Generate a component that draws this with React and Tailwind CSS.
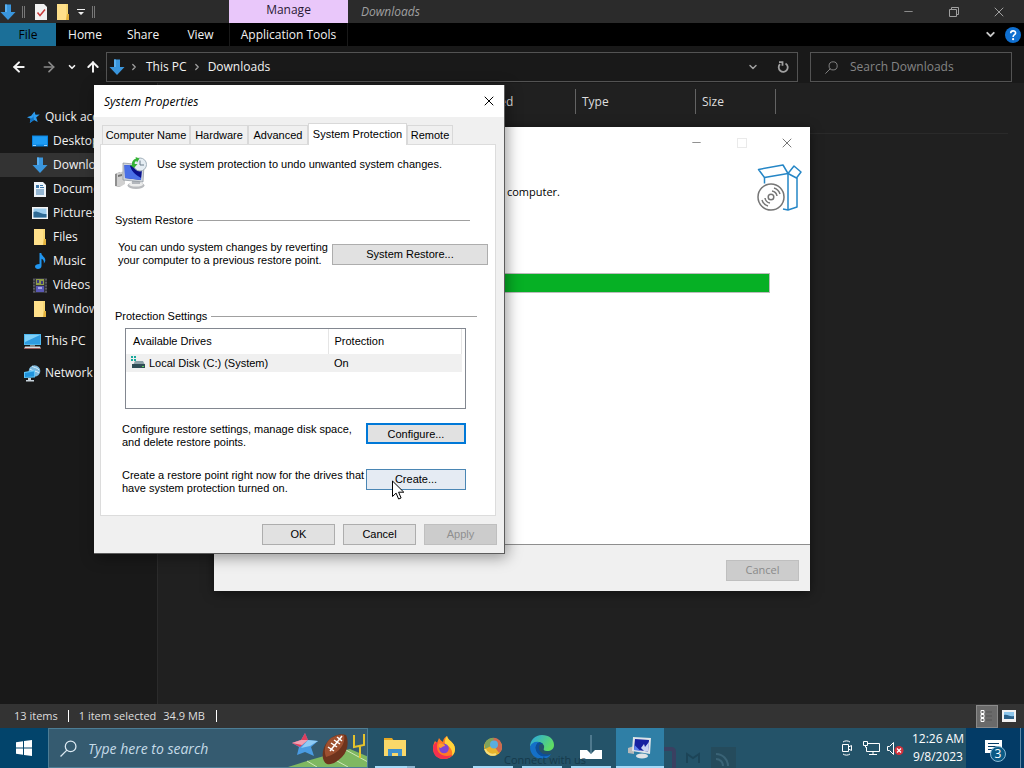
import { useState } from 'react';
import { ArrowLeft, ArrowRight, ArrowUp, ChevronDown, ChevronRight, Minus, X } from 'lucide-react';

const DownArrow = ({ size = 16 }) => (
    <svg width={size} height={size} viewBox="0 0 16 16">
        <path d="M5 0.5h6v7.5h4.5L8 16 0.5 8H5z" fill="#3a96dd" />
        <path d="M5 0.5h2v7.5H5z" fill="#5ab0f0" />
    </svg>
);

const FolderIcon = () => (
    <svg width="16" height="16" viewBox="0 0 16 16">
        <path d="M2 0h11v11h1v5H2z" fill="#f7d774" />
        <path d="M2 0h9v16H2z" fill="#ffe08a" />
        <path d="M12 10h2v6h-3z" fill="#e2b13c" />
    </svg>
);

const StarIcon = () => (
    <svg width="16" height="16" viewBox="0 0 16 16">
        <path d="M9.500 2.500l1 3.300 4.200-.2-3.500 2.900 1.500 4.500-3.700-2.100L4.800 14l.9-4.300L2 8.300l4.200-1.500z" fill="#2d9df0" />
        <path d="M9.500 2.500L8.200 8l-2.500 1.700L4.800 14l4.200-3.100L8.500 8z" fill="#1273c4" />
    </svg>
);

const DesktopIcon = () => (
    <svg width="16" height="16" viewBox="0 0 16 16">
        <path d="M0 2.500h16v11H0z" fill="#0a84e0" />
        <path d="M1 3.500h14v8H1z" fill="#1e9cf5" />
        <path d="M1 12h3v1H1zM12 12h3v1h-3z" fill="#9fd5ff" />
    </svg>
);

const DocIcon = () => (
    <svg width="16" height="16" viewBox="0 0 16 16">
        <path d="M2 1h9l3 3v12H2z" fill="#eef4f9" />
        <path d="M4 4h3v3H4zM8 4h3v1H8zM8 6h4v1H8zM4 8.500h8v1H4zM4 10.500h8v1H4zM4 12.500h8v1H4z" fill="#3b78ab" />
    </svg>
);

const PictureIcon = () => (
    <svg width="16" height="16" viewBox="0 0 16 16">
        <path d="M0 2h16v12H0z" fill="#f4f4f4" />
        <path d="M1.500 3.500h13v9h-13z" fill="#9ccdee" />
        <path d="M1.500 7c4-2 6 2 13 2v3.500h-13z" fill="#2f6a94" />
    </svg>
);

const MusicIcon = () => (
    <svg width="16" height="16" viewBox="0 0 16 16">
        <path d="M7.500 0h1.800c.3 3.200 4.200 4 4 7.500-.1 1.500-1 2.500-1.600 2.900.6-2.400-.4-4-2.200-4.600V13c0 1.900-1.700 3-3.500 3S3 15 3 13.500 4.700 11 7.500 11z" fill="#2196ef" />
    </svg>
);

const VideoIcon = () => (
    <svg width="16" height="16" viewBox="0 0 16 16">
        <path d="M1 1h14v15H1z" fill="#34343c" />
        <path d="M4 2h8v6H4z" fill="#8f9d4a" />
        <path d="M4 9h8v6H4z" fill="#5a59b5" />
        <path d="M5 3h2v3H5zM9 4h2v3H9z" fill="#3d3a80" />
        <path d="M6 10h4v2H6z" fill="#a5a4e6" />
        <path d="M2 2v14M14 2v14" stroke="#808080" strokeDasharray="1.500 1.500" />
    </svg>
);

const ThisPcIcon = () => (
    <svg width="17" height="16" viewBox="0 0 17 16">
        <path d="M0 1h17v11H0z" fill="#4fb8ef" />
        <path d="M1 2h15v9H1z" fill="#2f9be0" />
        <path d="M1 2h15L1 9z" fill="#7fd0f8" />
        <path d="M6 12h5v1.500H6z" fill="#8a8a8a" />
        <path d="M1 13.500h15L17 16H0z" fill="#d9dde0" />
        <path d="M0 15h17v1H0z" fill="#9a5a5a" />
    </svg>
);

const NetworkIcon = () => (
    <svg width="17" height="17" viewBox="0 0 17 17">
        <circle cx="10.500" cy="6" r="5.800" fill="#7db8dc" />
        <path d="M8 1c2 2 5 1 7 4M6 4c3 3 6 1 9 4" stroke="#d8eefb" fill="none" />
        <path d="M0 7l11-2v7.500L0 13z" fill="#5cc4f7" />
        <path d="M1 8l9-1.500v5L1 12z" fill="#2093dc" />
        <path d="M4 13h3v2H4zM2 15h8v1.500H2z" fill="#c8d4dc" />
    </svg>
);

const SystemIcon = ({ size = 32 }) => (
    <svg width={size} height={size} viewBox="0 0 32 32">
        <path d="M0 17l5-2v15l-5-1z" fill="#8f8f8f" />
        <path d="M2 16l8-2v13l-5 3-3-1z" fill="#d0d0d0" />
        <path d="M3 18l4-1v2l-4 1z" fill="#777" />
        <ellipse cx="21" cy="28.500" rx="8.500" ry="3.500" fill="#b9bbbe" />
        <ellipse cx="21" cy="27.300" rx="7" ry="2.300" fill="#eceded" />
        <path d="M17 22h8v5h-8z" fill="#b3b7bd" />
        <path d="M8 6l21 2-1 17-20-2z" fill="#cfd4da" stroke="#8a9098" strokeWidth=".7" />
        <path d="M9.500 8l17.500 1.500-1 13.500-16-2z" fill="#1224b4" />
        <path d="M9.500 8l6 .6c1 5 4 9 10.500 12.400V23l-16-2z" fill="#4a70e6" />
        <path d="M15 8.500l12 1-1 11c-6-3-10-7-11-12z" fill="#0a118a" />
        <circle cx="25" cy="7.500" r="6.500" fill="#e5edf3" stroke="#a2b0ba" />
        <path d="M25 3.500v4.500h4" stroke="#6b7d8a" fill="none" />
        <path d="M17 8c-.5-3 1-5.500 4-6.500l-.5-1.500 4 1.500-2.500 4-.7-1.700c-1.300.8-1.800 1.700-1.600 3.200h2.800L19 11l-4-3z" fill="#35b335" />
    </svg>
);

const DriveIcon = () => (
    <svg width="16" height="14" viewBox="0 0 16 14">
        <path d="M1 0h2v2H1zM4 0h2v2H4zM1 3h2v2H1zM4 3h2v2H4z" fill="#19a99d" />
        <path d="M5 5h8l2 4H3z" fill="#8ca0a8" />
        <path d="M2 8h13v4H2z" fill="#2f4c55" />
        <path d="M12 10h2v1h-2z" fill="#5ed35e" />
    </svg>
);

const BoxIcon = () => (
    <svg width="46" height="50" viewBox="0 0 46 50" fill="none">
        <g stroke="#2586c6" strokeWidth="1.500" strokeLinejoin="round">
            <path d="M1.500 6.500L26 2l5 8.500-23.500 4z" />
            <path d="M31 10.500l6-7.500 7 6-4.500 6z" />
            <path d="M7.500 14.500v6M31 10.500V47M40 15v29l-9 3-5-1" />
        </g>
        <g stroke="#767676" strokeWidth="1.500">
            <circle cx="14" cy="34" r="13" fill="#fff" />
            <circle cx="14" cy="34" r="2.800" />
            <path d="M15 28a6 6 0 015 5M17 25a9 9 0 016 6M13 40a6 6 0 01-5-5M11 43a9 9 0 01-6-6" />
        </g>
    </svg>
);

const SearchIcon = ({ size = 14 }) => (
    <svg width={size} height={size} viewBox="0 0 16 16" fill="none" stroke="currentColor" strokeWidth="1.200">
        <circle cx="10" cy="6" r="5" />
        <path d="M6.500 9.500L.5 15.500" />
    </svg>
);

const HelpIcon = () => (
    <svg width="16" height="16" viewBox="0 0 16 16" fill="none">
        <circle cx="8" cy="8" r="8" fill="#0f6fd0" />
        <path d="M5.700 6.200c0-3.200 4.900-3 4.900-.3 0 1.800-2.500 1.700-2.500 4" stroke="#fff" strokeWidth="1.600" />
        <circle cx="8.100" cy="12.200" r="1.100" fill="#fff" />
    </svg>
);

const RefreshIcon = () => (
    <svg width="12" height="12" viewBox="0 0 12 12" fill="none" stroke="currentColor" strokeWidth="1.800">
        <path d="M8.500 2.500A4.500 4.500 0 113 3.200" />
        <path d="M2 1.200h3.500v3.500" />
    </svg>
);

const TITLE_ICON = 'flex h-6 w-[45px] items-center justify-center';

const TitleBar = () => (
    <header className="flex h-[23px] items-stretch justify-between bg-[#2b2b2b] text-[#a0a0a0]">
        <div className="flex items-stretch">
            <div className="flex w-[229px] items-center">
                <DownArrow />
                <span className="ml-[6px] h-3 w-[3px] border-x border-[#777]" />
                <svg className="ml-[10px]" width="12" height="16" viewBox="0 0 12 16">
                    <path d="M0 0h9l3 3v13H0z" fill="#f2f2f2" />
                    <path d="M2.500 8.500l2.500 3 5-6" stroke="#c93c3c" strokeWidth="1.500" fill="none" />
                </svg>
                <span className="ml-2"><FolderIcon /></span>
                <svg className="ml-[6px]" width="8" height="8" viewBox="0 0 8 8" fill="#eee">
                    <path d="M0 1h8v1H0zM1 4h6L4 7z" />
                </svg>
                <span className="ml-[7px] h-3 w-[3px] border-x border-[#777]" />
            </div>
            <div className="w-[119px] bg-[#e9c7fa] text-center leading-[20px] text-[#2a1a35]">Manage</div>
            <h1 className="ml-[13px] leading-[23px] italic">Downloads</h1>
        </div>
        <div className="flex items-center pr-[3px]">
            <button aria-label="Minimize" className={TITLE_ICON}><Minus size={13} strokeWidth={1.5} /></button>
            <button aria-label="Restore" className={TITLE_ICON}>
                <svg width="10" height="10" viewBox="0 0 10 10" fill="none" stroke="currentColor">
                    <path d="M.5 2.500h7v7h-7zM2.500 2.500v-2h7v7h-2" />
                </svg>
            </button>
            <button aria-label="Close" className={TITLE_ICON}><X size={16} strokeWidth={1.5} /></button>
        </div>
    </header>
);

const Ribbon = () => (
    <nav className="flex h-[23px] items-stretch bg-black text-[#f2f2f2]">
        <button className="w-14 bg-[#1b6f98] text-black">File</button>
        <button className="w-[58px]">Home</button>
        <button className="w-[58px]">Share</button>
        <button className="w-[57px]">View</button>
        <button className="w-[119px] border-x border-[#191919]">Application Tools</button>
        <div className="ml-auto flex items-center gap-2 pr-[3px]">
            <ChevronDown size={13} strokeWidth={3.5} className="text-[#c8c8c8]" />
            <HelpIcon />
        </div>
    </nav>
);

const AddressBar = () => (
    <div className="flex h-[37px] items-center bg-[#191919] pr-3 pt-[5px] text-[#f2f2f2]">
        <div className="flex w-[106px] shrink-0 items-center">
            <button aria-label="Back" className="ml-[11px]"><ArrowLeft size={16} strokeWidth={3} /></button>
            <button aria-label="Forward" className="ml-[14px] text-[#8a8a8a]"><ArrowRight size={16} strokeWidth={2.5} /></button>
            <button aria-label="Recent locations" className="ml-[10px]"><ChevronDown size={10} strokeWidth={4} /></button>
            <button aria-label="Up" className="ml-[8px]"><ArrowUp size={16} strokeWidth={3} /></button>
        </div>
        <div className="flex h-[30px] flex-1 items-center border border-[#535353]">
            <span className="ml-[2px]"><DownArrow /></span>
            <ChevronRight className="ml-[4px] text-[#a0a0a0]" size={10} strokeWidth={3} />
            <a href="#pc" className="ml-[7px]">This PC</a>
            <ChevronRight className="ml-[5px] text-[#a0a0a0]" size={10} strokeWidth={3} />
            <a href="#downloads" className="ml-[6px]">Downloads</a>
            <ChevronDown className="ml-auto text-[#a0a0a0]" size={12} strokeWidth={3} />
            <button aria-label="Refresh" className="ml-[10px] flex w-7 justify-center text-[#a0a0a0]">
                <RefreshIcon />
            </button>
        </div>
        <label className="ml-3 flex h-[30px] w-[202px] items-center border border-[#535353] text-[#858585]">
            <span className="ml-[14px]"><SearchIcon size={13} /></span>
            <input aria-label="Search Downloads" placeholder="Search Downloads" className="ml-[12px] w-[140px] bg-transparent outline-none placeholder:text-[#858585]" />
        </label>
    </div>
);

const QUICK_ITEMS = [
    { name: 'Desktop', icon: DesktopIcon },
    { name: 'Downloads', icon: DownArrow, current: true },
    { name: 'Documents', icon: DocIcon },
    { name: 'Pictures', icon: PictureIcon },
    { name: 'Files', icon: FolderIcon },
    { name: 'Music', icon: MusicIcon },
    { name: 'Videos', icon: VideoIcon },
    { name: 'Windows', icon: FolderIcon },
];

const Sidebar = () => (
    <aside className="w-[158px] shrink-0 border-r border-[#2b2b2b] bg-[#191919] pt-[22px] text-[#f2f2f2]">
        <a href="#quick" className="flex h-6 items-center gap-1 pl-[25px]"><StarIcon />Quick access</a>
        {QUICK_ITEMS.map(({ name, icon: Icon, current }) => (
            <a key={name} href="#folder" className={`flex h-6 items-center gap-[5px] pl-8 ${current ? 'bg-[#333]' : ''}`}>
                <Icon />{name}
            </a>
        ))}
        <a href="#pc" className="mt-2 flex h-6 items-center gap-1 pl-6"><ThisPcIcon />This PC</a>
        <a href="#network" className="mt-2 flex h-6 items-center gap-1 pl-6"><NetworkIcon />Network</a>
    </aside>
);

const FileList = () => (
    <main className="min-w-0 flex-1 bg-[#202020] pt-[6px] text-[#dedede]">
        <div className="flex h-[25px] leading-[25px]">
            <div className="w-[270px]" />
            <div className="w-[148px] border-r border-[#636363] pl-[6px]">Date modified</div>
            <div className="w-[120px] border-r border-[#636363] pl-[6px]">Type</div>
            <div className="w-20 border-r border-[#636363] pl-[6px]">Size</div>
        </div>
        <div className="mx-4 mt-[19px] border-t border-[#2a2a2a]" />
    </main>
);

const StatusBar = () => (
    <footer className="flex h-6 items-center bg-[#333] pl-[14px] pr-[7px] text-[11px] text-[#dedede]">
        <span>13 items</span>
        <span className="ml-[10px] h-3 border-l border-white" />
        <span className="ml-[10px]">1 item selected</span>
        <span className="ml-[7px]">34.9 MB</span>
        <span className="ml-[11px] h-3 border-l border-white" />
        <button aria-label="Details view" className="ml-auto flex h-[23px] w-[22px] items-center border border-[#8a8a8a] bg-[#6a6a6a] pl-[3px]">
            <svg width="12" height="14" viewBox="0 0 12 14" fill="none">
                <path d="M1 1.500h3v3H1zM1 5.500h3v3H1zM1 9.500h3v3H1z" stroke="#fff" />
                <path d="M6 3h6M6 7h6M6 11h6" stroke="#555" />
            </svg>
        </button>
        <button aria-label="Thumbnail view" className="ml-[3px] flex w-4 justify-center">
            <svg width="14" height="12" viewBox="0 0 14 12">
                <path d="M0 0h14v12H0z" fill="#f2f2f2" />
                <path d="M2 2h10v7H2z" fill="#8cc6ec" />
                <path d="M2 5c4-1 5 2 10 1v3H2z" fill="#2c628a" />
            </svg>
        </button>
    </footer>
);

const InstallerWindow = () => (
    <section aria-label="Setup" className="absolute left-[214px] top-[127px] flex h-[464px] w-[596px] flex-col bg-white text-black shadow-[0_2px_10px_rgba(0,0,0,0.5)]">
        <div className="flex h-[31px] items-center justify-end pr-px text-[#777]">
            <button aria-label="Minimize" className={TITLE_ICON}><Minus size={13} strokeWidth={1.5} /></button>
            <button aria-label="Maximize" disabled className={TITLE_ICON}><span className="size-[10px] border border-[#eaeaea]" /></button>
            <button aria-label="Close" className={TITLE_ICON}><X size={16} strokeWidth={1.5} /></button>
        </div>
        <div className="flex justify-between pl-[54px] pr-[7px] pt-[5px]">
            <p className="w-[292px] pt-[21px] text-right text-[11px] leading-4">Please wait while setup runs on your computer.</p>
            <BoxIcon />
        </div>
        <div className="ml-[54px] mr-10 mt-[60px] h-5 border border-[#bcbcbc] bg-[#06b025]" />
        <div className="mt-auto flex h-[47px] items-center justify-end border-t border-[#8e8e8e] bg-[#f0f0f0] pr-[11px] pt-1">
            <button disabled className="h-[21px] w-[73px] border border-[#bfbfbf] bg-[#ccc] text-[11px] text-[#8a8a8a]">Cancel</button>
        </div>
    </section>
);

const TABS = ['Computer Name', 'Hardware', 'Advanced', 'System Protection', 'Remote'];
const TAB_WIDTHS = ['w-[88px]', 'w-[58px]', 'w-[60px]', 'w-[99px]', 'w-[46px]'];

const Group = ({ title, className, children }) => (
    <section className={className}>
        <h2 className="ml-[14px] flex items-center gap-1 leading-4">
            {title}
            <span className="flex-1 border-t border-[#a0a0a0]" />
        </h2>
        {children}
    </section>
);

const PushButton = ({ className = '', ...props }) => (
    <button className={`h-[21px] shrink-0 border leading-[19px] ${className}`} {...props} />
);

const PLAIN = 'border-[#adadad] bg-[#e1e1e1]';

const SystemProperties = () => {
    const [tab, setTab] = useState('System Protection');

    return (
        <section role="dialog" aria-label="System Properties" className="absolute left-[94px] top-[85px] w-[411px] whitespace-nowrap border-b border-r border-[#5c5c5c] bg-[#f0f0f0] font-['Liberation_Sans',Arial,sans-serif] text-[11px] leading-[13px] text-black shadow-[2px_3px_14px_rgba(0,0,0,0.4)]">
            <div className="flex h-8 items-center justify-between bg-white pl-[10px] pr-[7px] font-['Open_Sans',sans-serif] text-[12px]">
                <h1 className="italic">System Properties</h1>
                <button aria-label="Close"><X size={16} strokeWidth={1.5} /></button>
            </div>
            <div role="tablist" className="flex h-[27px] items-end pl-2">
                {TABS.map((name, i) => (
                    <button
                        key={name}
                        role="tab"
                        aria-selected={tab === name}
                        onClick={() => setTab(name)}
                        className={`whitespace-nowrap border border-b-0 border-[#d9d9d9] ${TAB_WIDTHS[i]} ${tab === name ? '-mb-px h-[22px] bg-white pb-px' : 'h-[19px] bg-[#f0f0f0]'}`}
                    >
                        {name}
                    </button>
                ))}
            </div>
            <div className="ml-[6px] mr-2 border border-[#dcdcdc] bg-white pb-[20px] pt-3">
                <div className="flex pl-[14px]">
                    <SystemIcon />
                    <p className="ml-[10px] pt-px">Use system protection to undo unwanted system changes.</p>
                </div>
                <Group title="System Restore" className="mt-[23px] [&>h2]:mr-[25px]">
                    <div className="mt-[13px] flex items-center justify-between pl-[17px] pr-[7px]">
                        <p>You can undo system changes by reverting<br />your computer to a previous restore point.</p>
                        <PushButton className={`w-[156px] ${PLAIN}`}>System Restore...</PushButton>
                    </div>
                </Group>
                <Group title="Protection Settings" className="mt-[41px] [&>h2]:mr-[18px]">
                    <div className="ml-[24px] mr-[29px] mt-1 h-[81px] border border-[#828790] pr-[3px]">
                        <table className="w-full border-collapse text-left">
                            <thead>
                                <tr className="h-[25px]">
                                    <th className="w-[202px] border-r border-[#e5e5e5] pl-[7px] font-normal">Available Drives</th>
                                    <th className="border-r border-[#e5e5e5] pl-[6px] font-normal">Protection</th>
                                </tr>
                            </thead>
                            <tbody>
                                <tr className="h-[18px] bg-[#f0f0f0]">
                                    <td className="pl-1"><span className="flex items-center gap-[3px]"><DriveIcon />Local Disk (C:) (System)</span></td>
                                    <td className="pl-[6px]">On</td>
                                </tr>
                            </tbody>
                        </table>
                    </div>
                    <div className="ml-[21px] mr-[29px] mt-[14px] flex items-start justify-between">
                        <p>Configure restore settings, manage disk space,<br />and delete restore points.</p>
                        <PushButton className="w-[100px] border-2 border-[#0078d7] bg-[#e1e1e1] leading-[17px]">Configure...</PushButton>
                    </div>
                    <div className="ml-[21px] mr-[29px] mt-[20px] flex items-start justify-between">
                        <p>Create a restore point right now for the drives that<br />have system protection turned on.</p>
                        <PushButton className="w-[100px] border-[#4a86b4] bg-[#e5ebf3]">Create...</PushButton>
                    </div>
                </Group>
            </div>
            <div className="flex justify-end gap-2 pb-2 pr-[7px] pt-2">
                <PushButton className={`w-[73px] ${PLAIN}`}>OK</PushButton>
                <PushButton className={`w-[73px] ${PLAIN}`}>Cancel</PushButton>
                <PushButton disabled className="w-[73px] border-[#bfbfbf] bg-[#ccc] text-[#8f8f8f]">Apply</PushButton>
            </div>
        </section>
    );
};

const Cursor = () => (
    <svg className="pointer-events-none absolute left-[392px] top-[480px]" width="13" height="20" viewBox="0 0 13 20">
        <path d="M.5 1v15.500l3.600-3.400 2.500 5.900 2.500-1-2.500-5.800h5.200z" fill="#fff" stroke="#000" />
    </svg>
);

const ExplorerTaskIcon = () => (
    <svg width="24" height="20" viewBox="0 0 24 20">
        <path d="M1 1h8l2 3H1z" fill="#e6a823" />
        <path d="M1 3h22v16H1z" fill="#fad869" />
        <path d="M5 19v-7h14v7h-4v-3H9v3z" fill="#3f90cc" />
    </svg>
);

const FirefoxIcon = () => (
    <svg width="24" height="24" viewBox="0 0 24 24">
        <path d="M12 23C5 23 1 18 1 12c0-3 1-5 2-7l2 2 2-5c1 2 3 3 4 4 0-3 2-5 4-6 1 5 8 6 8 13 0 6-5 10-11 10z" fill="#ff7a24" />
        <path d="M15 0c1 5 8 6 8 13 0 3-1 5-3 7 1-5-1-8-4-10-3-1-5-4-1-10z" fill="#ffd43a" />
        <path d="M1 12c0 7 4 11 11 11 4 0 7-2 8-4-8 3-15-1-15-8 0-2 0-3 1-5C3 6 1 9 1 12z" fill="#f5304e" />
        <circle cx="12" cy="12.500" r="4.800" fill="#8045d3" />
        <path d="M7 8c3-1 6 0 6 2-2 0-3 1-4 2-2 0-3-2-2-4z" fill="#ff9a30" />
    </svg>
);

const ChromeIcon = () => (
    <svg width="20" height="20" viewBox="0 0 20 20">
        <circle cx="10" cy="10" r="9" fill="#e8b32c" />
        <path d="M9 1c6-1 10 4 10 9 0 3-1 5-3 6L11 9z" fill="#cf6952" />
        <path d="M2 6c2-4 5-5 9-5L8 9 2 12z" fill="#7fa35c" />
        <circle cx="11" cy="7.500" r="4" fill="#5aaee0" />
        <path d="M2 12a8 8 0 0011 5" stroke="#f6dd7a" strokeWidth="2" fill="none" />
    </svg>
);

const EdgeIcon = () => (
    <svg width="26" height="26" viewBox="0 0 26 26">
        <defs>
            <linearGradient id="edgeTop" x1="0" x2="1" y1="0" y2="0.500">
                <stop offset="0" stopColor="#27a6e6" />
                <stop offset="1" stopColor="#5fdc64" />
            </linearGradient>
        </defs>
        <path d="M1 13C1 6 6 1 13 1s12 4 12 10c0 4-3 6-7 6-3 0-4-1-3-3 1-4-3-6-7-5-4 0-6 2-7 4z" fill="url(#edgeTop)" />
        <path d="M1 13c1-4 5-6 9-5-3 2-4 5-3 8 2 6 9 8 15 4-2 4-6 5-9 5C6 25 1 20 1 13z" fill="#1470c8" />
        <path d="M10 12c-1 6 4 10 12 8-5 4-13 3-15-4-1-3 0-6 3-8 2 0 3 1 4 2-2 0-3 0-4 2z" fill="#0c4f9c" />
    </svg>
);

const InstallerTaskIcon = () => (
    <svg width="22" height="26" viewBox="0 0 22 26">
        <path d="M11 1v18" stroke="#7ba0b4" />
        <path d="M0 16h7l4 4 4-4h7v9H0z" fill="#fff" />
    </svg>
);

const SystemTaskIcon = () => (
    <svg width="24" height="24" viewBox="0 0 24 24">
        <path d="M0 13l6-2v8l-6-1z" fill="#b9b9b9" />
        <ellipse cx="14" cy="21" rx="6" ry="2.500" fill="#dfe3e6" />
        <path d="M5 2l18 1-1 16-18-3z" fill="#dde3e8" />
        <path d="M7 4l14 1-1 11.500-14-2z" fill="#1620a0" />
        <path d="M6.500 10l6 6-6.500-1z" fill="#5c80ee" />
        <path d="M13 13l3-4 1 3 4-5-1 9.500-4-.5z" fill="#c9d4f2" />
    </svg>
);

const TASKS = [
    { name: 'File Explorer', icon: ExplorerTaskIcon, mark: 'mx-1 border-r-8 border-[#8db5d0]' },
    { name: 'Firefox', icon: FirefoxIcon },
    { name: 'Chrome', icon: ChromeIcon, mark: 'mx-1' },
    { name: 'Edge', icon: EdgeIcon, mark: 'mx-1' },
    { name: 'Setup', icon: InstallerTaskIcon, mark: 'mx-1' },
    { name: 'System Properties', icon: SystemTaskIcon, mark: '', active: true },
];

const SearchArt = () => (
    <svg width="84" height="38" viewBox="-2 0 84 38" fill="none">
        <path d="M3 38C25 31 45 25 65 20l19 8v10z" fill="#7fb861" />
        <path d="M22 32l10 6M43 27l20 11M61 21l22 12" stroke="#cfe6b8" />
        <path d="M20 4l3 7 10 1-7 6 3 9-9-4-8 3 2-8-7-4 9-3z" fill="#4a9be2" />
        <path d="M20 4l-4 7-9 3 8 4 2-2 6-5z" fill="#de3f5c" />
        <path d="M16 11l7 0-6 5-10-2z" fill="#f2a0b0" />
        <path d="M23 11l10 1-8 5-9 2z" fill="#90cbf5" />
        <path d="M42 35c-6-3-6-15 1-23 5-6 13-8 18-6 3 6 2 16-4 22-5 5-10 8-15 7z" fill="#6e341d" />
        <path d="M41 28c-3-8 0-15 5-19 5-3 10-4 13-3 2 8-4 18-18 22z" fill="#9d5030" />
        <path d="M45 22L57 7M43 18l6 4M46 14l6 4M49 11l6 4M52 8l5 4" stroke="#fff" strokeWidth="1.500" />
        <path d="M69 6v12l10-2V5M75 17v12" stroke="#e5c22c" strokeWidth="2" />
    </svg>
);

const Tray = () => (
    <div className="flex items-center text-white">
        <svg width="14" height="16" viewBox="0 0 14 16" fill="none" stroke="currentColor">
            <path d="M2.500 4.500h6v7h-6zM8.500 7l3-1.500v5L8.500 9M3 2c2-1.500 5-1.500 7 0M3 14c2 1.500 5 1.500 7 0" />
        </svg>
        <svg className="ml-[9px]" width="17" height="15" viewBox="0 0 17 15" fill="none" stroke="currentColor">
            <path d="M5 2.500h11.500v8H3.500V6M10 10.500v3M6 13.500h8M.5.500h4v4h-4zM2.500 4.500v2" />
        </svg>
        <svg className="ml-[7px]" width="17" height="15" viewBox="0 0 17 15" fill="none">
            <path d="M.5 5.500h2l4-4v12l-4-4h-2z" stroke="#fff" />
            <circle cx="12" cy="9.500" r="4.500" fill="#d3303b" />
            <path d="M10 7.500l4 4M14 7.500l-4 4" stroke="#fff" strokeWidth="1.200" />
        </svg>
        <time className="ml-[6px] w-14 whitespace-nowrap text-center leading-[18px]">12:26 AM<br />9/8/2023</time>
    </div>
);

const Taskbar = () => (
    <div className="relative flex h-10 shrink-0 items-stretch overflow-hidden bg-[#245369]">
        <button aria-label="Start" className="flex w-12 items-center justify-center bg-[#02446b]">
            <svg width="16" height="16" viewBox="0 0 16 16" fill="#fff">
                <path d="M0 2.200l7-1v6.300H0zM8 1l8-1v7.500H8zM0 8.500h7v6.300l-7-1zM8 8.500h8V16l-8-1z" />
            </svg>
        </button>
        <label className="flex w-80 items-center border border-[#4d7d95] bg-[#355b70] text-[#dbe9f2]">
            <span className="ml-[11px]"><SearchIcon size={17} /></span>
            <input aria-label="Type here to search" placeholder="Type here to search" className="ml-[11px] min-w-0 flex-1 bg-transparent text-[14px] italic outline-none placeholder:text-[#c5dbe8]" />
            <SearchArt />
        </label>
        <div className="ml-[3px] flex gap-px">
            {TASKS.map(({ name, icon: Icon, mark, active }) => (
                <button key={name} aria-label={name} className={`flex w-12 flex-col items-stretch ${active ? 'bg-[#2f7fa6]' : ''}`}>
                    <span className="flex flex-1 items-center justify-center"><Icon /></span>
                    {mark !== undefined && <span className={`h-[2px] bg-[#a5daf8] ${mark}`} />}
                </button>
            ))}
        </div>
        {/* page showing through the translucent bar */}
        <span className="pointer-events-none absolute left-[504px] top-[23px] text-[11px] leading-[17px] text-[#10303f] opacity-70">Connect with us</span>
        <svg className="pointer-events-none absolute left-[644px] top-[18px] opacity-40" width="96" height="22" viewBox="0 0 96 22" fill="none">
            <path d="M20 3h7c2 0 3 1 3 3v16" stroke="#5b2456" strokeWidth="4" />
            <path d="M43 17V8l6 4 6-4v9" stroke="#11303e" strokeWidth="2" />
            <path d="M67 1h25v21H67z" fill="#28414b" />
            <path d="M72 8a12 12 0 0112 12M72 13a7 7 0 017 7" stroke="#5b7c8a" strokeWidth="2" />
        </svg>
        <div className="ml-auto flex items-stretch">
            <Tray />
            <button aria-label="Notifications" className="relative flex w-[55px] items-center justify-center border-r border-[#5d87a5] bg-[#033b66]">
                <svg width="17" height="17" viewBox="0 0 17 17">
                    <path d="M0 0h17v13h-5v4l-4-4H0z" fill="#fff" />
                    <path d="M3 3.500h11M3 6.500h11M3 9.500h7" stroke="#033b66" />
                </svg>
                <span className="absolute left-[24px] top-[18px] size-4 rounded-full border border-[#8dbad6] bg-[#0a5a85] text-center leading-[14px] text-white">3</span>
            </button>
            <span className="w-[3px] bg-[#033b66]" />
        </div>
    </div>
);

export default function App() {
    return (
        <div className="relative flex h-screen flex-col overflow-hidden bg-[#191919] font-['Open_Sans','Noto_Sans',sans-serif] text-[12px]">
            <TitleBar />
            <Ribbon />
            <AddressBar />
            <div className="flex min-h-0 flex-1">
                <Sidebar />
                <FileList />
            </div>
            <StatusBar />
            <Taskbar />
            <InstallerWindow />
            <SystemProperties />
            <Cursor />
        </div>
    );
}
